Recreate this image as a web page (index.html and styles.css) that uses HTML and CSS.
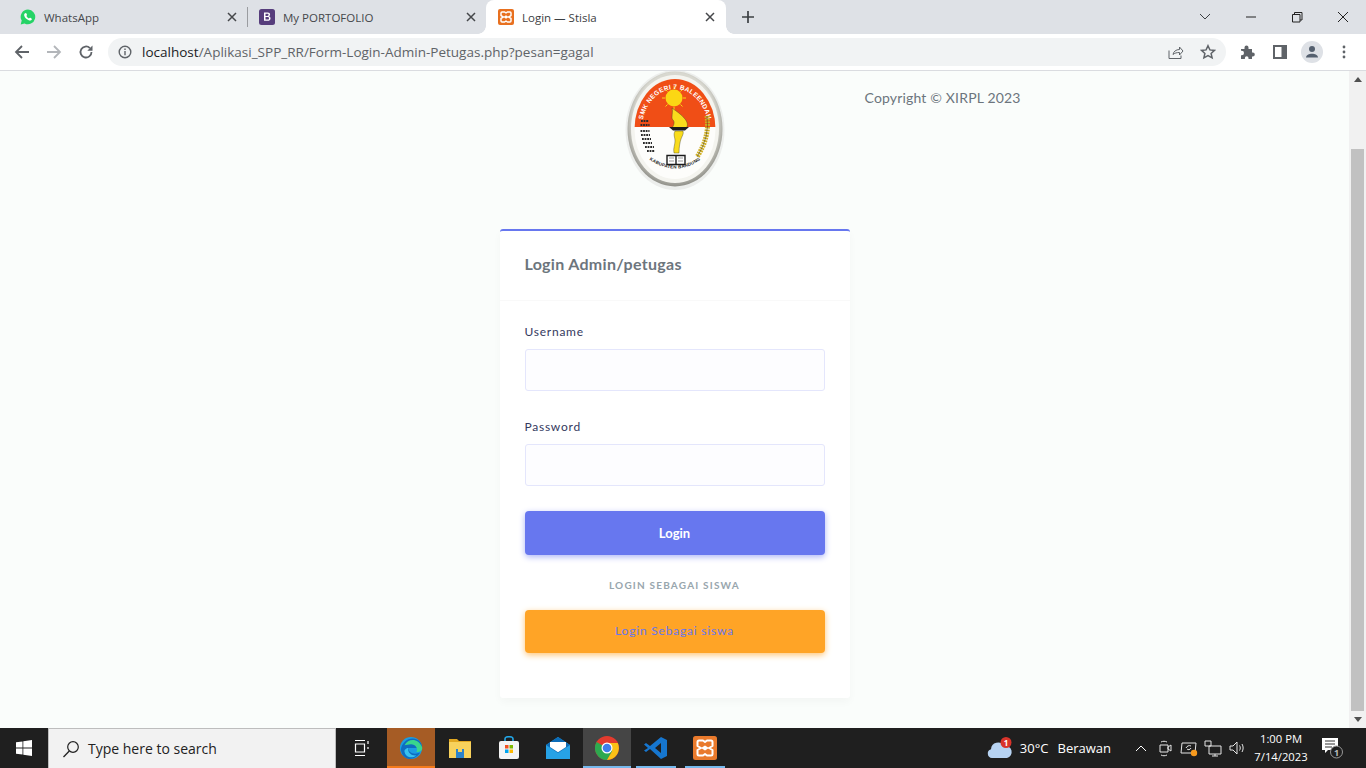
FILE: index.html
```html
<!DOCTYPE html>
<html lang="en">
<head>
<meta charset="utf-8">
<title>Login — Stisla</title>
<link rel="stylesheet" href="styles.css">
</head>
<body>
<div class="tabstrip">
  <div class="tab tab-one">
    <svg class="favicon" viewBox="0 0 16 16"><path d="M8 .6a7.3 7.3 0 0 0-6.3 11L.7 15.400l3.900-1A7.300 7.300 0 1 0 8 .6z" fill="#25d366"/><path d="M5.500 4.200c.9-.5 1.200.9 1.500 1.600.2.500-.7 1-.5 1.400.5 1 1.300 1.700 2.300 2.200.5.200.9-.8 1.400-.6.700.3 1.900.9 1.600 1.600-.4 1-1.600 1.300-2.600 1-2.500-.6-4.400-2.500-5-4.800-.2-.9.100-1.900.8-2.400z" fill="#fff"/></svg>
    <span class="tab-title">WhatsApp</span>
    <svg class="tab-close" viewBox="0 0 10 10"><path d="M1 1l8 8M9 1l-8 8"/></svg>
  </div>
  <div class="tab-sep"></div>
  <div class="tab tab-two">
    <svg class="favicon" viewBox="0 0 16 16"><rect width="16" height="16" rx="2.500" fill="#563d7c"/><path d="M5 3.500h3.700c1.500 0 2.400.8 2.400 2 0 .9-.5 1.500-1.300 1.800 1 .2 1.700 1 1.700 2.100 0 1.500-1.100 2.400-2.800 2.400H5zm1.500 1.200v2.300h1.800c1 0 1.300-.5 1.300-1.200 0-.7-.4-1.100-1.300-1.100zm0 3.400v2.500h2c1 0 1.500-.4 1.500-1.200 0-.9-.5-1.300-1.600-1.300z" fill="#fff"/></svg>
    <span class="tab-title">My PORTOFOLIO</span>
    <svg class="tab-close" viewBox="0 0 10 10"><path d="M1 1l8 8M9 1l-8 8"/></svg>
  </div>
  <div class="tab tab-active">
    <svg class="favicon" viewBox="0 0 24 24"><rect width="24" height="24" rx="3" fill="#e8701f"/><path d="M6 4.500h4l2 1.500 2-1.500h4a1.500 1.500 0 0 1 1.500 1.500v4L16 12l3.500 2v4a1.500 1.500 0 0 1-1.500 1.500h-4L12 18l-2 1.500H6A1.500 1.500 0 0 1 4.500 18v-4L8 12l-3.500-2V6A1.500 1.500 0 0 1 6 4.500z" fill="none" stroke="#fff" stroke-width="2.200" stroke-linejoin="round"/><path d="M8 12l4-2.500 4 2.500-4 2.500z" fill="#fff"/></svg>
    <span class="tab-title tab-title-active">Login — Stisla</span>
    <svg class="tab-close tab-close-active" viewBox="0 0 10 10"><path d="M1 1l8 8M9 1l-8 8"/></svg>
  </div>
  <svg class="new-tab" viewBox="0 0 12 12"><path d="M6 0v12M0 6h12"/></svg>
  <div class="strip-spacer"></div>
  <svg class="win-caret" viewBox="0 0 12 8"><path d="M1 1l5 5 5-5"/></svg>
  <div class="win-controls">
    <svg class="win-btn" viewBox="0 0 46 20"><path d="M18 10h10"/></svg>
    <svg class="win-btn" viewBox="0 0 46 20"><path d="M18.500 7.500h7.500v7.500h-7.500zM20.500 7.500v-2h7.500v7.500h-2"/></svg>
    <svg class="win-btn" viewBox="0 0 46 20"><path d="M18 5l10 10M28 5L18 15"/></svg>
  </div>
</div>

<div class="toolbar">
  <svg class="nav-icon" viewBox="0 0 16 16"><path d="M15 8H2M8 2L2 8l6 6" fill="none" stroke="#5f6368" stroke-width="1.800"/></svg>
  <svg class="nav-icon" viewBox="0 0 16 16"><path d="M1 8h13M8 2l6 6-6 6" fill="none" stroke="#b3b6ba" stroke-width="1.800"/></svg>
  <svg class="nav-icon" viewBox="0 0 16 16"><path d="M13.500 8a5.500 5.500 0 1 1-1.600-3.900" fill="none" stroke="#5f6368" stroke-width="1.800"/><path d="M14.500 1.500v5.200H9.300z" fill="#5f6368"/></svg>
  <div class="omnibox">
    <svg class="info-icon" viewBox="0 0 14 14"><circle cx="7" cy="7" r="5.800" fill="none" stroke="#5f6368" stroke-width="1.400"/><path d="M6.300 6h1.400v4.200H6.300zM6.300 3.500h1.400v1.400H6.300z" fill="#5f6368"/></svg>
    <span class="url"><span class="url-host">localhost</span>/Aplikasi_SPP_RR/Form-Login-Admin-Petugas.php?pesan=gagal</span>
    <span class="omni-spacer"></span>
    <svg class="omni-icon" viewBox="0 0 16 16"><path d="M1 6.500v8h12v-3M5 10.500c.5-3 3-5 6.500-5V3L15 7l-3.500 4V8.500c-2.500 0-5 .5-6.500 2z" fill="none" stroke="#5f6368" stroke-width="1"/></svg>
    <svg class="omni-icon star" viewBox="0 0 16 16"><path d="M8 1.700l1.900 4.200 4.600.5-3.400 3 1 4.500-4.100-2.300-4.100 2.300 1-4.500-3.400-3 4.600-.5z" fill="none" stroke="#5f6368" stroke-width="1.500"/></svg>
  </div>
  <svg class="tool-icon puzzle" viewBox="0 0 16 16"><path d="M1 5h3.500V3.500a2 2 0 0 1 4 0V5H12v3.500h.8a2 2 0 0 1 0 4H12V15H8.500v-1a1.800 1.800 0 0 0-3.600 0v1H1v-3.800h.8a2.200 2.200 0 0 0 0-4.400H1z" fill="#5f6368"/></svg>
  <svg class="tool-icon side" viewBox="0 0 14 14"><path fill-rule="evenodd" d="M0 0h14v14H0zM2 2v10h6.500V2z" fill="#5f6368"/></svg>
  <div class="avatar"><svg viewBox="0 0 14 14"><circle cx="7" cy="4" r="3" fill="#55606f"/><path d="M1 12.500c0-2.500 3-3.800 6-3.800s6 1.300 6 3.800z" fill="#55606f"/></svg></div>
  <svg class="kebab" viewBox="0 0 4 14"><circle cx="2" cy="2" r="1.400"/><circle cx="2" cy="7" r="1.400"/><circle cx="2" cy="12" r="1.400"/></svg>
</div>

<div class="viewport">
  <main class="page">
    <div class="center-col">
      <div class="logo-row">
        <svg class="logo" viewBox="0 0 100 122">
          <defs>
            <clipPath id="inner"><ellipse cx="50" cy="58" rx="40.500" ry="50"/></clipPath>
            <radialGradient id="ring" cx="50%" cy="45%" r="55%"><stop offset="80%" stop-color="#d8d8d0"/><stop offset="100%" stop-color="#8f8f88"/></radialGradient>
            <path id="arc-top" d="M17 58A33 40 0 0 1 83 58"/>
            <path id="arc-bottom" d="M22 87Q50 108 78 87"/>
          </defs>
          <ellipse cx="50" cy="59" rx="49.500" ry="60" fill="#eceeec"/>
          <ellipse cx="50" cy="58" rx="47.500" ry="57.500" fill="url(#ring)"/>
          <ellipse cx="50" cy="58" rx="44" ry="54" fill="#f4f4ef"/>
          <g clip-path="url(#inner)">
            <rect x="0" y="0" width="100" height="56" fill="#f04e16"/>
            <rect x="0" y="56" width="100" height="66" fill="#fdfdfb"/>
          </g>
          <circle cx="49" cy="27" r="8.500" fill="#fbd714"/>
          <g stroke="#fbd714" stroke-width="1"><path d="M49 15v3M49 36v3M37 27h3M58 27h3M40.500 18.500l2 2M57.500 18.500l-2 2M40.500 35.500l2-2M57.500 35.500l-2-2"/></g>
          <text class="logo-text"><textPath href="#arc-top" startOffset="50%" text-anchor="middle">SMK NEGERI 7 BALEENDAH</textPath></text>
          <text class="logo-text logo-text-dark"><textPath href="#arc-bottom" startOffset="50%" text-anchor="middle">KABUPATEN BANDUNG</textPath></text>
          <path d="M47 37c4 3 9 6 13 11 3 4 3 7 1 9H47c2-3 3-6 1-8-1-1-1-2-1-3 0-3 1-6 0-9z" fill="#f9dc1c" stroke="#3a3a2a" stroke-width=".4"/>
          <path d="M44 56h20l-4 3.500H48z" fill="#1c1c1c"/>
          <path d="M50 60h8c1 3-1 5-2 8-1 3-2 8-2 14h-5c-1-5 1-8 1-12 0-4-2-6 0-10z" fill="#f9dc1c" stroke="#3a3a2a" stroke-width=".4"/>
          <path d="M42 84.500h9v9h-9zM51 84.500h9v9h-9z" fill="#fff" stroke="#1c1c1c" stroke-width="1.400"/>
          <path d="M44 87h5M44 90h5M53 87h5M53 90h5" stroke="#555" stroke-width=".6"/>
          <g stroke="#2b2b2b" stroke-width="2" stroke-dasharray="1.800 .8"><path d="M16 50h8M15.500 54h9M15.500 60h9M16 64h9M17 68h9M18 72h9M20 76h9M22 80h8"/></g>
          <path d="M82 45Q85 66 72 86" fill="none" stroke="#cfae24" stroke-width="5" stroke-dasharray="1.800 .9"/>
          <path d="M82 45Q85 66 72 86" fill="none" stroke="#3a3a1c" stroke-width=".5"/>
        </svg>
        <p class="copyright">Copyright © XIRPL 2023</p>
      </div>
      <section class="card">
        <h4 class="card-title">Login Admin/petugas</h4>
        <form class="card-body">
          <label class="field-label" for="username">Username</label>
          <input class="field-input" id="username" type="text">
          <label class="field-label field-label-second" for="password">Password</label>
          <input class="field-input" id="password" type="password">
          <button class="btn btn-primary" type="button">Login</button>
          <div class="divider-text">LOGIN SEBAGAI SISWA</div>
          <a class="btn btn-warning">Login Sebagai siswa</a>
        </form>
      </section>
    </div>
  </main>
  <div class="scrollbar">
    <div class="scroll-arrow"><svg viewBox="0 0 8 5"><path d="M4 0l4 5H0z"/></svg></div>
    <div class="scroll-gap"></div>
    <div class="scroll-thumb"></div>
    <div class="scroll-arrow"><svg viewBox="0 0 8 5"><path d="M0 0h8L4 5z"/></svg></div>
  </div>
</div>

<footer class="taskbar">
  <div class="start"><svg viewBox="0 0 16 16"><path d="M0 2.300l6.500-.9v6.200H0zM7.300 1.300L16 0v7.600H7.300zM0 8.400h6.500v6.200L0 13.700zM7.300 8.400H16V16l-8.700-1.300z" fill="#fff"/></svg></div>
  <div class="search-box">
    <svg viewBox="0 0 18 18"><circle cx="11" cy="7" r="5.300" fill="none" stroke="#222" stroke-width="1.200"/><path d="M7.300 11L1.500 17" stroke="#222" stroke-width="1.300"/></svg>
    <span>Type here to search</span>
  </div>
  <div class="task task-view"><svg viewBox="0 0 16 16"><path d="M1 .5h10M1 15.500h10M1.500 4h9v8h-9zM14 1v3M14 7v2" fill="none" stroke="#fff" stroke-width="1.200"/></svg></div>
  <div class="task task-edge"><svg viewBox="0 0 26 26"><circle cx="13" cy="13" r="12" fill="#1b9de2"/><path d="M2 15C3 6 12 0 20 4c4 2 5 6 5 9H10c0 5 6 8 13 5-3 5-8 7-12 7-6-1-8-5-9-10z" fill="#0f6cc0"/><path d="M6 10c4-8 15-8 19 2 1 4-3 6-6 5 2-3-1-8-6-8-3 0-5 1-7 1z" fill="#39d58d"/><path d="M10 13c-1 5 4 9 9 8-5 4-12 2-13-4-.5-2 2-4 4-4z" fill="#37c1f0"/></svg></div>
  <div class="task task-folder"><svg viewBox="0 0 24 22"><path d="M1 2h8l2 2h12v4H1z" fill="#e2a821"/><rect x="1" y="5" width="22" height="16" fill="#f8d25c"/><rect x="8" y="12" width="8" height="9" fill="#2b82c9"/><rect x="10" y="12" width="4" height="3" fill="#f8d25c"/></svg></div>
  <div class="task task-store"><svg viewBox="0 0 22 24"><path d="M7 6V3c0-3 8-3 8 0v3" fill="none" stroke="#22a7e8" stroke-width="1.600"/><rect x="1" y="5" width="20" height="18" rx="2" fill="#f4f4f4"/><rect x="7" y="9" width="3.500" height="3.500" fill="#f25022"/><rect x="11.500" y="9" width="3.500" height="3.500" fill="#7fba00"/><rect x="7" y="13.500" width="3.500" height="3.500" fill="#00a4ef"/><rect x="11.500" y="13.500" width="3.500" height="3.500" fill="#ffb900"/></svg></div>
  <div class="task task-mail"><svg viewBox="0 0 24 22"><path d="M0 8l12-8 12 8v14H0z" fill="#27a2e6"/><path d="M0 8l12 8 12-8-12-8z" fill="#0b6cb8"/><path d="M4 10V5h16v5l-8 5.300z" fill="#fff"/></svg></div>
  <div class="task task-chrome"><svg viewBox="0 0 24 24"><circle cx="12" cy="12" r="12" fill="#e33b2e"/><path d="M12 12L1.600 6A12 12 0 0 0 12 24l6-10z" fill="#2da94f"/><path d="M12 7h10.800A12 12 0 0 1 12 24l5.200-9z" fill="#fbc116"/><circle cx="12" cy="12" r="5.500" fill="#fff"/><circle cx="12" cy="12" r="4.300" fill="#3f7fea"/></svg></div>
  <div class="task task-vscode"><svg viewBox="0 0 24 24"><path d="M17 1l6 3v16l-6 3L6 13l-4 3-2-1.500L4 12 0 8.500 2 7l4 3zM17 7l-6 5 6 5z" fill="#1676cf"/></svg></div>
  <div class="task task-xampp"><svg viewBox="0 0 24 24"><rect width="24" height="24" rx="2.500" fill="#e97a2c"/><path d="M6 4.500h4l2 1.500 2-1.500h4a1.500 1.500 0 0 1 1.500 1.500v4L16 12l3.500 2v4a1.500 1.500 0 0 1-1.500 1.500h-4L12 18l-2 1.500H6A1.500 1.500 0 0 1 4.500 18v-4L8 12l-3.500-2V6A1.500 1.500 0 0 1 6 4.500z" fill="none" stroke="#fff" stroke-width="2" stroke-linejoin="round"/><path d="M8 12l4-2.500 4 2.500-4 2.500z" fill="#fff"/></svg></div>
  <div class="task-spacer"></div>
  <div class="weather">
    <svg viewBox="0 0 26 22"><path d="M5 21a4.500 4.500 0 0 1-1-8.800A7 7 0 0 1 17 9a5.500 5.500 0 0 1 3 12z" fill="#b7d3f2"/><circle cx="19" cy="5.500" r="5.500" fill="#d9342b"/><text class="badge-num" x="19" y="8.500">1</text></svg>
    <span class="weather-temp">30°C</span>
    <span class="weather-label">Berawan</span>
  </div>
  <div class="tray">
    <svg class="tray-up" viewBox="0 0 12 7"><path d="M1 6l5-5 5 5"/></svg>
    <svg class="tray-i" viewBox="0 0 18 18"><path d="M4 6h8v7H4zM12 8l3-2v6l-3-2zM5 3c2-1 4-1 6 0M5 16c2 1 4 1 6 0"/></svg>
    <svg class="tray-i" viewBox="0 0 18 18"><path d="M2 4h14l-1 10H1zM6 9c1-2 3-3 5-2M11 9c-1 2-3 2-4 1"/><circle class="tray-dot" cx="14" cy="14" r="3.200"/></svg>
    <svg class="tray-i" viewBox="0 0 18 18"><path d="M1 2h6v5H1zM5 7h12v8H5zM11 15v2M8 17h6"/></svg>
    <svg class="tray-i" viewBox="0 0 18 18"><path d="M2 7h3l4-4v12l-4-4H2zM11.500 6.500c1 1.500 1 3.500 0 5M14 5c1.500 2.500 1.500 5.500 0 8"/></svg>
  </div>
  <div class="clock"><span>1:00 PM</span><span>7/14/2023</span></div>
  <div class="notif">
    <svg viewBox="0 0 24 24"><path d="M1 2h16v12H7l-3 3v-3H1z" fill="#fff"/><path d="M4 5h10M4 8h10M4 11h7" stroke="#333" stroke-width="1"/><circle cx="15.500" cy="16" r="6" fill="#1f1f1f" stroke="#999" stroke-width="1"/><text class="notif-num" x="15.500" y="19.500">1</text></svg>
  </div>
</footer>
</body>
</html>
```

FILE: styles.css
```css
* { box-sizing: border-box; }
html, body { margin: 0; height: 100%; overflow: hidden; }
body { display: flex; flex-direction: column; width: 1366px; height: 768px; font-family: "Open Sans", "Liberation Sans", sans-serif; background: #fff; }

.tabstrip { height: 34px; flex: none; display: flex; align-items: center; background: #dee1e6; }
.tab { height: 34px; display: flex; align-items: center; font: 11.500px "Open Sans", "Liberation Sans", sans-serif; color: #45474a; }
.tab-one { width: 247px; padding: 0 10px 0 20px; }
.tab-two { width: 238px; padding: 0 10px 0 11px; }
.tab-active { position: relative; width: 240px; height: 34px; padding: 0 11px 0 12px; background: #fff; border-radius: 8px 8px 0 0; color: #3c4043; }
.tab-active::before, .tab-active::after { content: ""; position: absolute; bottom: 0; width: 8px; height: 8px; }
.tab-active::before { left: -8px; background: radial-gradient(circle at 0 0, transparent 7.500px, #fff 8px); }
.tab-active::after { right: -8px; background: radial-gradient(circle at 100% 0, transparent 7.500px, #fff 8px); }
.tab-sep { width: 1px; height: 20px; background: #9a9ca0; flex: none; }
.favicon { width: 16px; height: 16px; flex: none; margin-right: 8px; }
.tab-title { flex: 1; white-space: nowrap; }
.tab-close { width: 10px; height: 10px; flex: none; }
.tab-close path { stroke: #45474a; stroke-width: 1.500; fill: none; }
.new-tab { width: 12px; height: 12px; margin-left: 16px; flex: none; }
.new-tab path { stroke: #3c4043; stroke-width: 1.700; fill: none; }
.strip-spacer { flex: 1; }
.win-caret { width: 12px; height: 8px; flex: none; margin-right: 17px; }
.win-caret path { stroke: #3c4043; stroke-width: 1; fill: none; }
.win-controls { display: flex; }
.win-btn { width: 46px; height: 20px; display: block; }
.win-btn path { stroke: #222; stroke-width: 1; fill: none; }

.toolbar { height: 37px; flex: none; display: flex; align-items: center; background: #fff; border-bottom: 1px solid #dadce0; padding: 0 0 1px 14px; }
.nav-icon { width: 16px; height: 16px; flex: none; margin-right: 16px; }
.omnibox { width: 1118px; height: 28px; margin-left: -2px; border-radius: 14px; background: #f1f3f4; display: flex; align-items: center; padding: 0 10px; flex: none; }
.info-icon { width: 14px; height: 14px; flex: none; margin-right: 10px; }
.url { font-size: 13.520px; color: #5f6368; white-space: nowrap; }
.url-host { color: #202124; }
.omni-spacer { flex: 1; }
.omni-icon { width: 16px; height: 16px; flex: none; }
.star { margin-left: 16px; }
.tool-icon { width: 16px; height: 16px; flex: none; }
.puzzle { margin-left: 14px; }
.side { margin-left: 17px; width: 14px; height: 14px; }
.avatar { width: 22px; height: 22px; border-radius: 50%; background: #dee1e6; margin-left: 14px; display: flex; align-items: center; justify-content: center; flex: none; }
.avatar svg { width: 14px; height: 14px; }
.kebab { width: 4px; height: 14px; margin-left: 19px; flex: none; fill: #5f6368; }

.viewport { flex: 1; display: flex; min-height: 0; background: #fafdfb; }
.page { flex: 1; min-width: 0; overflow: hidden; display: flex; justify-content: center; }
.center-col { width: 350px; }
.logo-row { position: relative; height: 158px; display: flex; justify-content: center; }
.logo { width: 100px; height: 122px; display: block; }
.logo-text { font: 700 6.500px "Liberation Sans", sans-serif; fill: #fff; letter-spacing: .3px; }
.logo-text-dark { fill: #222; font-size: 4.500px; letter-spacing: .2px; }
.copyright { position: absolute; left: 365px; top: 18px; margin: 0; font: 400 14px/18px Lato, sans-serif; letter-spacing: .17px; color: #6c757d; white-space: nowrap; }
.card { background: #fff; border-top: 2px solid #6777ef; border-radius: 3px; box-shadow: 0 4px 8px rgba(0,0,0,.03); height: 469px; }
.card-title { margin: 0; height: 70px; display: flex; align-items: center; padding: 0 25px 4px; border-bottom: 1px solid #f9f9f9; font: 700 16px Lato, sans-serif; letter-spacing: .3px; color: #6c757d; }
.card-body { display: flex; flex-direction: column; padding: 21px 25px 20px; }
.field-label { font: 400 12px/20px Lato, sans-serif; letter-spacing: .75px; color: #34395e; margin-bottom: 7px; }
.field-label-second { margin-top: 26px; }
.field-input { height: 42px; width: 100%; background: #fdfdff; border: 1px solid #e4e6fc; border-radius: 3px; outline: 0; }
.btn { display: flex; align-items: center; justify-content: center; width: 100%; border: 0; border-radius: 4px; padding: 0; font: 700 13px Lato, sans-serif; }
.btn-primary { height: 44px; margin-top: 25px; background: #6777ef; color: #fff; box-shadow: 0 2px 6px #acb5f6; }
.divider-text { margin: 23px 0 18px; text-align: center; font: 700 10px/14px Lato, sans-serif; letter-spacing: 1.200px; color: #98a6ad; }
.btn-warning { height: 43px; padding-bottom: 2px; background: #ffa426; color: #6777ef; font-size: 12px; font-weight: 400; letter-spacing: .8px; box-shadow: 0 2px 6px #ffc473; }

.scrollbar { width: 17px; flex: none; display: flex; flex-direction: column; background: #f1f1f1; }
.scroll-arrow { height: 17px; display: flex; align-items: center; justify-content: center; flex: none; }
.scroll-arrow svg { width: 8px; height: 5px; fill: #505050; }
.scroll-gap { height: 61px; flex: none; }
.scroll-thumb { flex: 1; margin: 0 2px; background: #c1c1c1; }

.taskbar { height: 40px; flex: none; display: flex; align-items: stretch; background: #1f1f1f; color: #fff; }
.start { width: 48px; display: flex; align-items: center; justify-content: center; }
.start svg { width: 16px; height: 16px; }
.search-box { width: 288px; background: #f2f2f2; border: 1px solid #bdbdbd; border-bottom: 0; display: flex; align-items: center; gap: 8px; padding-left: 13px; color: #222; font: 14px "Open Sans", sans-serif; }
.search-box svg { width: 18px; height: 18px; }
.task { position: relative; width: 49px; display: flex; align-items: center; justify-content: center; }
.task svg { width: 24px; height: 24px; }
.task-view { width: 51px; }
.task-view svg { width: 16px; height: 16px; }
.task-edge { width: 48px; background: #a65c25; }
.task-mail { width: 50px; }
.task-chrome { width: 48px; background: #454545; }
.task-edge::after, .task-chrome::after, .task-vscode::after, .task-xampp::after { content: ""; position: absolute; bottom: 0; left: 0; right: 0; height: 2px; background: #76b9ed; }
.task-edge::after { background: #f47a1b; }
.task-vscode::after, .task-xampp::after { left: 5px; right: 4px; }
.task-spacer { flex: 1; }
.weather { display: flex; align-items: center; font: 13px "Open Sans", sans-serif; margin-right: 24px; }
.weather svg { width: 26px; height: 22px; margin-right: 7px; }
.weather-label { margin-left: 9px; }
.badge-num { font: 700 8px "Open Sans", sans-serif; fill: #fff; text-anchor: middle; }
.tray { display: flex; align-items: center; gap: 6px; margin-right: 8px; }
.tray-up { width: 12px; height: 7px; margin-right: 3px; }
.tray-up path { fill: none; stroke: #fff; stroke-width: 1; }
.tray-i { width: 18px; height: 18px; }
.tray-i path { fill: none; stroke: #e6e6e6; stroke-width: 1; }
.tray-dot { fill: #f79a1e; }
.clock { display: flex; flex-direction: column; align-items: center; justify-content: center; width: 54px; font: 11.250px/18px "Open Sans", sans-serif; white-space: nowrap; }
.notif { width: 50px; margin-right: 8px; display: flex; align-items: center; justify-content: center; }
.notif svg { width: 24px; height: 24px; }
.notif-num { font: 700 9px "Open Sans", sans-serif; fill: #bbb; text-anchor: middle; }
```
